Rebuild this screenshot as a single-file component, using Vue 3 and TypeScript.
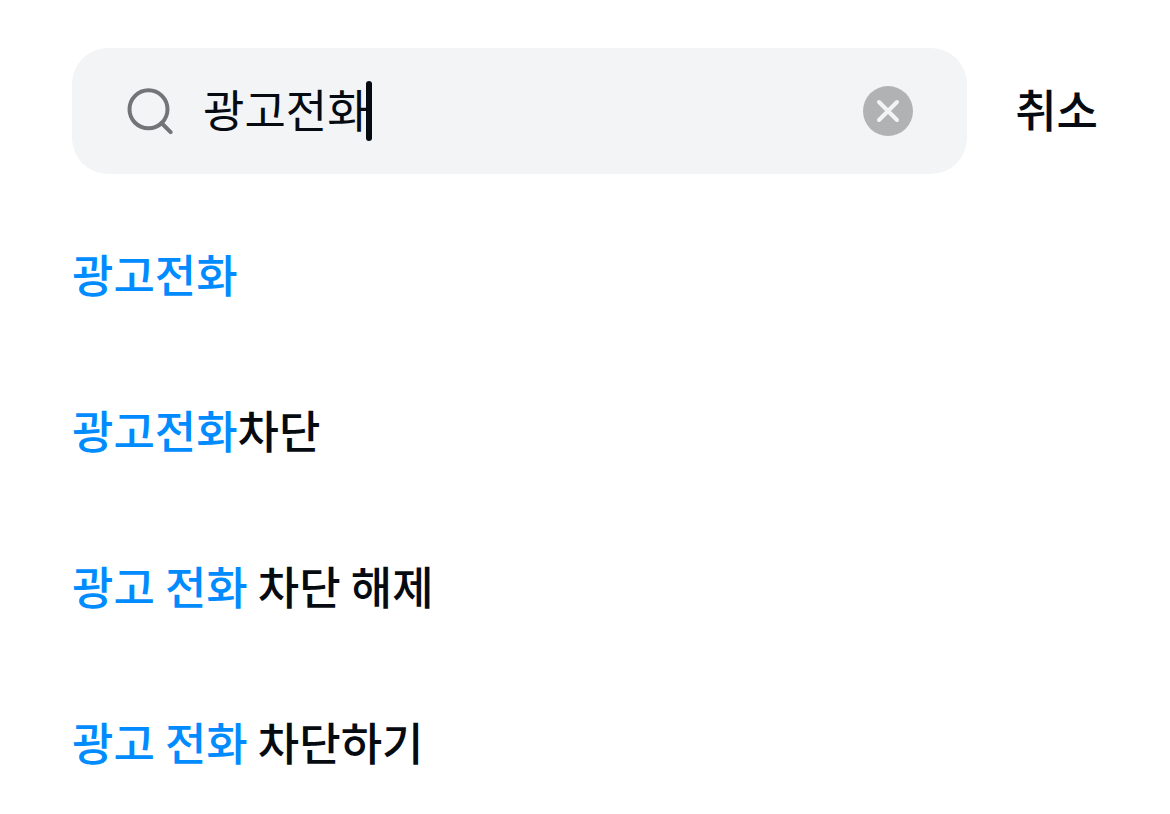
<script setup lang="ts">
import { ref } from 'vue'

interface Part {
  text: string
  match: boolean
}

const query = ref<string>('광고전화')

const suggestions: Part[][] = [
  [{ text: '광고전화', match: true }],
  [{ text: '광고전화', match: true }, { text: '차단', match: false }],
  [{ text: '광고 전화', match: true }, { text: ' 차단 해제', match: false }],
  [{ text: '광고 전화', match: true }, { text: ' 차단하기', match: false }],
]
</script>

<template>
  <main class="page">
    <form class="bar" role="search" @submit.prevent>
      <div class="field">
        <svg class="lens" viewBox="0 0 48 48" aria-hidden="true">
          <circle cx="22.5" cy="22.3" r="19" />
          <path d="M35.5 36 L44.6 45.2" />
        </svg>
        <div class="entry">
          <input v-model="query" class="input" type="text" aria-label="검색어" autocomplete="off" />
          <span class="mirror" aria-hidden="true">{{ query }}<i class="caret"></i></span>
        </div>
        <button class="clear" type="button" aria-label="지우기" @click="query = ''">
          <svg viewBox="0 0 50 50" aria-hidden="true">
            <circle cx="25" cy="25" r="25" />
            <path d="M16 16 L34 34 M34 16 L16 34" />
          </svg>
        </button>
      </div>
      <button class="cancel" type="button">취소</button>
    </form>

    <ul class="list">
      <li v-for="(parts, i) in suggestions" :key="i">
        <a class="item" href="#"><span v-for="(part, j) in parts" :key="j" :class="{ match: part.match }">{{ part.text }}</span></a>
      </li>
    </ul>
  </main>
</template>

<style>
body {
  margin: 0;
  background: #fff;
}
</style>

<style scoped>
.page {
  box-sizing: border-box;
  padding: 48px 72px 40px;
  font-family: "Noto Sans CJK KR", sans-serif;
  font-size: 45px;
  line-height: 60px;
  color: #060b11;
}

.bar {
  display: flex;
  align-items: center;
  gap: 48px;
}

.field {
  flex: 1;
  min-width: 0;
  box-sizing: border-box;
  height: 126px;
  padding: 0 54px;
  display: flex;
  align-items: center;
  border-radius: 36px;
  background: #f3f4f6;
}

.lens {
  flex: none;
  width: 48px;
  height: 48px;
  margin-right: 29px;
  fill: none;
  stroke: #727477;
  stroke-width: 4;
  stroke-linecap: round;
}

.entry {
  flex: 1;
  min-width: 0;
  display: grid;
}

.input,
.mirror {
  grid-area: 1 / 1;
  font: inherit;
  white-space: pre;
}

.input {
  box-sizing: border-box;
  width: 100%;
  min-width: 0;
  height: 60px;
  padding: 0 0 4px;
  border: 0;
  outline: 0;
  background: none;
  color: inherit;
  caret-color: transparent;
}

.mirror {
  position: relative;
  justify-self: start;
  color: transparent;
  pointer-events: none;
}

.caret {
  position: absolute;
  top: 0;
  right: -3px;
  width: 6px;
  height: 60px;
  border-radius: 3px;
  background: #060b11;
}

.clear,
.cancel {
  flex: none;
  padding: 0;
  border: 0;
  background: none;
  font: inherit;
  color: inherit;
  cursor: pointer;
}

.clear {
  width: 50px;
  height: 50px;
}

.clear svg {
  display: block;
  fill: #b1b2b4;
}

.clear path {
  stroke: #f3f4f6;
  stroke-width: 4;
  stroke-linecap: round;
}

.cancel {
  padding-bottom: 4px;
  font-weight: 500;
}

.list {
  display: grid;
  gap: 96px;
  margin: 70px 0 0;
  padding: 0;
  list-style: none;
}

.item {
  display: block;
  font-weight: 500;
  color: inherit;
  text-decoration: none;
  white-space: pre-wrap;
}

.match {
  color: #008cff;
}
</style>
